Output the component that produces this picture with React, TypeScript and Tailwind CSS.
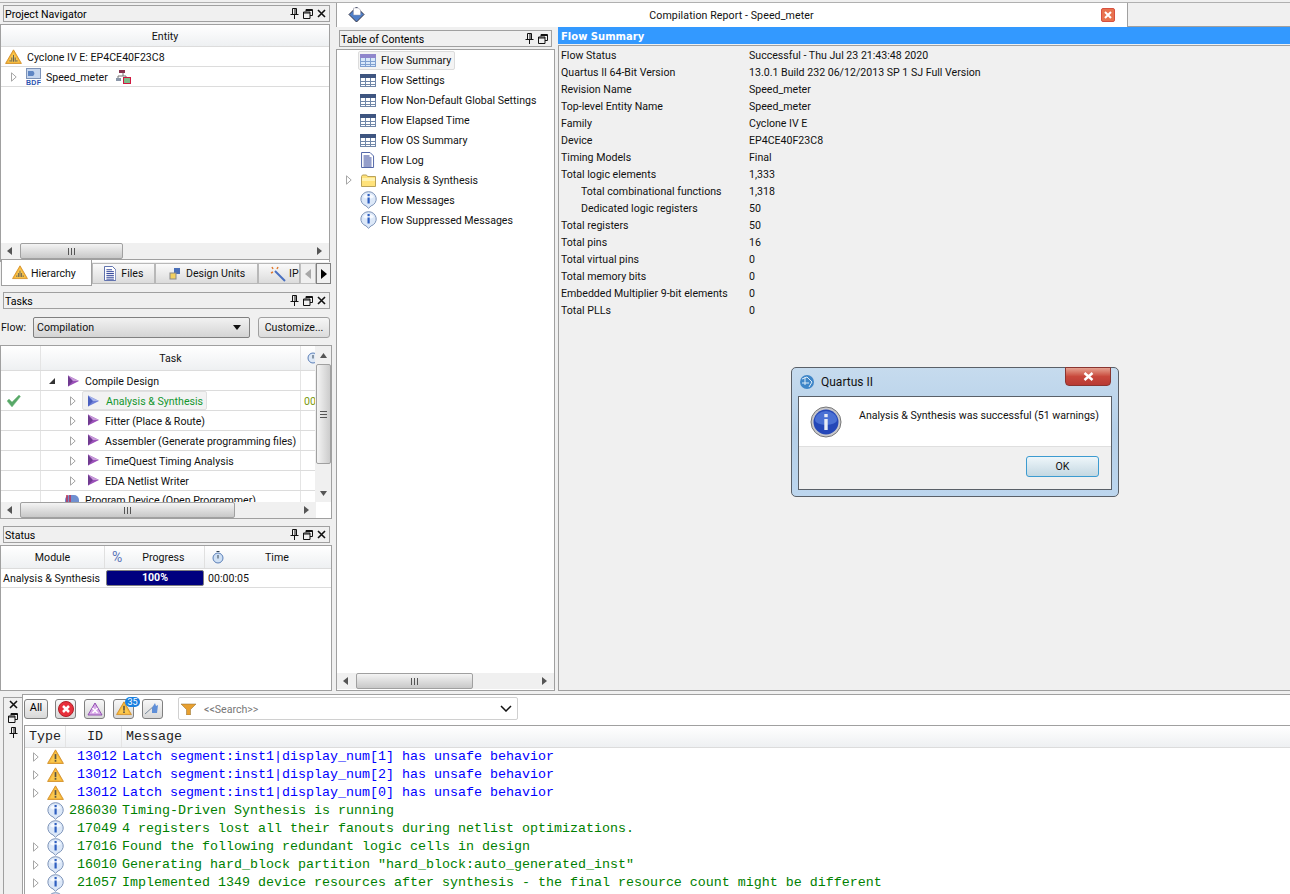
import React from "react";

const UI = { fontFamily: 'Roboto, "Liberation Sans", sans-serif' };
const MONO = { fontFamily: '"Liberation Mono", monospace' };
const HEAD = { fontFamily: '"DejaVu Sans", sans-serif' };

function Pin() {
  return (
    <svg width="9" height="11" viewBox="0 0 9 11" fill="none" stroke="#111">
      <path d="M2.500 .5h4v6h-4zM.5 6.500h8M4.500 7v4M5 1v5" />
    </svg>
  );
}
function Restore() {
  return (
    <svg width="10" height="10" viewBox="0 0 10 10" fill="none" stroke="#111">
      <path d="M3 2.500V.5h6.500v6H7M.5 3h6.500v6.500H.5z" />
      <path d="M.5 4h6.500M3 1.500h6.500" />
    </svg>
  );
}
function Close() {
  return (
    <svg width="9" height="9" viewBox="0 0 9 9" stroke="#111" strokeWidth="1.600">
      <path d="M1 1l7 7M8 1l-7 7" />
    </svg>
  );
}
function Title({ text, noClose, className }: { text: string; noClose?: boolean; className: string }) {
  return (
    <div className={`flex items-center h-[17px] border border-[#a0a0a0] bg-[#f0f0f0] pl-[1px] pr-[3px] text-black ${className}`}>
      <span className="flex-1 leading-[14px] pt-[2px]">{text}</span>
      <span className="flex items-center gap-[4px]">
        <Pin />
        <Restore />
        {!noClose && <Close />}
      </span>
    </div>
  );
}
function Warn({ size = 18, hatch }: { size?: number; hatch?: boolean }) {
  return (
    <svg width={size} height={size * 0.9} viewBox="0 0 20 18" className="shrink-0">
      <path d="M10 1L19.300 17H.7z" fill="#f6b73c" stroke="#d08a20" strokeLinejoin="round" />
      <path d="M10 4L16.500 15.500h-13z" fill="#fbc94f" />
      {hatch ? (
        <path d="M8 15V10M10 15V7M12 15V10M6 15V13M14 15V13" stroke="#5b5a55" strokeWidth="1.100" />
      ) : (
        <>
          <rect x="9" y="6" width="2" height="6" fill="#5b5340" />
          <rect x="9" y="13" width="2" height="2" fill="#5b5340" />
        </>
      )}
    </svg>
  );
}
function Info() {
  return (
    <svg width="17" height="18" viewBox="0 0 17 18" className="shrink-0">
      <path d="M8.500 .7a7.600 7.300 0 0 1 2.600 14.200L8.500 17.300 6 14.900A7.600 7.300 0 0 1 8.500 .7z" fill="#dce8f8" stroke="#7d93b8" />
      <path d="M3 6a6 5 0 0 1 11 0 6 3 0 0 1-11 0z" fill="#f6faff" />
      <rect x="7.500" y="6.500" width="2.200" height="6" fill="#2e5fc0" />
      <rect x="7.500" y="3" width="2.200" height="2.200" fill="#2e5fc0" />
    </svg>
  );
}
function Expand({ className = "" }: { className?: string }) {
  return (
    <svg width="6" height="10" viewBox="0 0 6 10" className={`shrink-0 ${className}`}>
      <path d="M.5 .8L5.200 5 .5 9.200z" fill="#fff" stroke="#a6a6a6" />
    </svg>
  );
}
function Play({ blue }: { blue?: boolean }) {
  return (
    <svg width="13" height="12" viewBox="0 0 13 12" className="shrink-0">
      <path d="M1 .5L12 6 1 11.500z" fill={blue ? "#6f7fd8" : "#9a4fb8"} />
      <path d="M1 .5L6 6 1 11.500z" fill={blue ? "#4a5fc0" : "#6f3a90"} />
      <path d="M1 .5L12 6 6 6z" fill={blue ? "#a8b4ea" : "#c79ad8"} />
    </svg>
  );
}
function TableIcon({ hi }: { hi?: boolean }) {
  const line = hi ? "#7f9fd0" : "#6f86a8";
  return (
    <svg width="16" height="13" viewBox="0 0 16 13" className="shrink-0">
      <rect x=".5" y=".5" width="15" height="12" fill={hi ? "#d9e8fa" : "#fff"} stroke={line} />
      <rect x="0" y="0" width="16" height="4" fill={hi ? "#8f86cc" : "#3e5580"} />
      <path d="M0 7.500h16M0 10.500h16M5.500 4v9M10.500 4v9" stroke={line} />
    </svg>
  );
}
function DocIcon({ size = 16 }: { size?: number }) {
  return (
    <svg width={size * 0.82} height={size} viewBox="0 0 13 16" className="shrink-0">
      <path d="M.5 .5h8.500l3.500 3.500v11.500H.5z" fill="#fff" stroke="#5468a8" />
      <path d="M2.500 4h6M2.500 6h8M2.500 8h8M2.500 10h8M2.500 12h8M2.500 14h8" stroke="#2b3f96" />
    </svg>
  );
}
function Folder() {
  return (
    <svg width="15" height="13" viewBox="0 0 15 13" className="shrink-0">
      <path d="M.5 2.500l1-1.500h4l1 1.500h8v10H.5z" fill="#ffe27a" stroke="#b9a25a" />
      <path d="M1 4h13v3H1z" fill="#fff2b0" />
    </svg>
  );
}
function HScroll({ thumbLeft, thumbWidth, w, cls }: { thumbLeft: number; thumbWidth: number; w: string; cls?: string }) {
  return (
    <div className={`flex items-center h-[16px] shrink-0 bg-[#f0f0f0] ${w} ${cls ?? ""}`}>
      <svg width="6" height="8" viewBox="0 0 6 8" className="ml-[6px] shrink-0"><path d="M5 0v8L0 4z" fill="#555" /></svg>
      <div className="flex-1 h-full">
        <div
          className="h-full border border-[#a0a0a0] rounded-[2px] bg-gradient-to-b from-[#f4f4f4] to-[#c8c8c8] flex items-center justify-center"
          style={{ marginLeft: thumbLeft, width: thumbWidth }}
        >
          <svg width="7" height="7" viewBox="0 0 7 7" stroke="#555"><path d="M.5 0v7M3.500 0v7M6.500 0v7" /></svg>
        </div>
      </div>
      <svg width="6" height="8" viewBox="0 0 6 8" className="mr-[6px] shrink-0"><path d="M0 0v8l5-4z" fill="#555" /></svg>
    </div>
  );
}
function Tab({ w, pl, gap, icon, label }: { w: string; pl: string; gap: string; icon: React.ReactNode; label: string }) {
  return (
    <div className={`flex items-center h-[21px] mt-[3px] border border-[#b8b8b8] bg-gradient-to-b from-[#fafafa] to-[#dcdcdc] overflow-hidden ${w} ${pl} ${gap}`}>
      {icon}
      <span>{label}</span>
    </div>
  );
}

const tasks = [
  { name: "Analysis & Synthesis", active: true },
  { name: "Fitter (Place & Route)" },
  { name: "Assembler (Generate programming files)" },
  { name: "TimeQuest Timing Analysis" },
  { name: "EDA Netlist Writer" },
];

function LeftColumn() {
  return (
    <div className="w-[333px] shrink-0 flex flex-col pt-[2px] text-[10.6px] text-[#111]">
      <Title text="Project Navigator" className="ml-[3px] w-[327px]" />
      <div className="mt-[2px] w-[330px] h-[238px] shrink-0 border-t border-x border-[#a0a0a0] bg-white flex flex-col">
        <div className="h-[21px] shrink-0 pt-[3px] bg-gradient-to-b from-white to-[#eef0f2] flex items-center justify-center">Entity</div>
        <div className="h-[21px] shrink-0 border-y border-[#dcdcdc] flex items-center pl-[4px] gap-[5px]">
          <Warn size={17} hatch />
          <span className="pt-[2px]">Cyclone IV E: EP4CE40F23C8</span>
        </div>
        <div className="h-[20px] shrink-0 border-b border-[#dcdcdc] flex items-center pl-[10px]">
          <Expand />
          <svg width="15" height="17" viewBox="0 0 15 17" className="ml-[9px]">
            <rect x=".5" y=".5" width="14" height="10" fill="#c6d6ee" stroke="#7d93b8" />
            <path d="M2 3h5a3 3 0 0 1 0 5H2z" fill="#5f86c4" />
            <text x="0" y="16.500" fontSize="7" fontWeight="700" fill="#2d54b0" fontFamily="Liberation Sans, sans-serif" textLength="15">BDF</text>
          </svg>
          <span className="ml-[5px] pt-[2px]">Speed_meter</span>
          <svg width="15" height="14" viewBox="0 0 15 14" className="ml-[8px]">
            <path d="M7 3v3M2 6h8M2 6v2M10 6v2" stroke="#777" fill="none" />
            <rect x="3" y="0" width="6" height="3" fill="#8a3550" />
            <rect x="0" y="8" width="5" height="3" fill="#8a96a8" />
            <rect x="7.500" y="7.500" width="7" height="6" fill="#7dbb8a" stroke="#d01840" />
          </svg>
        </div>
        <div className="flex-1" />
        <HScroll thumbLeft={7} thumbWidth={103} w="w-full" />
        <div className="h-[3px] shrink-0 border-t border-[#a0a0a0]" />
      </div>
      <div className="flex items-start h-[26px] shrink-0 -mt-[2px]">
        <div className="w-[91px] h-[26px] ml-[1px] bg-white border-x border-b border-[#a0a0a0] flex items-center pl-[10px] gap-[3px] z-10">
          <Warn size={16} hatch />
          <span className="pt-[2px]">Hierarchy</span>
        </div>
        <Tab w="w-[63px]" pl="pl-[11px]" gap="gap-[5px]" icon={<DocIcon size={15} />} label="Files" />
        <Tab w="w-[103px]" pl="pl-[13px]" gap="gap-[5px]" icon={
          <svg width="12" height="13" viewBox="0 0 12 13"><rect x="5" y="1" width="6" height="6" fill="#4a6fb8" /><rect x="1" y="6" width="6" height="6" fill="#f2d060" stroke="#888" /></svg>
        } label="Design Units" />
        <Tab w="w-[42px]" pl="pl-[11px]" gap="gap-[3px]" icon={
          <svg width="16" height="16" viewBox="0 0 16 16" className="shrink-0"><path d="M5 5l10 10" stroke="#4a70c0" strokeWidth="2" /><path d="M2 1l1 2M8 1L7 3M1 7l2-1" stroke="#e07a30" strokeWidth="1.500" /></svg>
        } label="IP" />
        <div className="w-[16px] h-[21px] mt-[3px] border border-[#c0c0c0] bg-[#f0f0f0] flex items-center justify-center">
          <svg width="6" height="10" viewBox="0 0 6 10"><path d="M6 0v10L0 5z" fill="#a8a8a8" /></svg>
        </div>
        <div className="w-[15px] h-[21px] mt-[3px] border border-[#808080] bg-[#f0f0f0] flex items-center justify-center">
          <svg width="6" height="10" viewBox="0 0 6 10"><path d="M0 0v10l6-5z" fill="#000" /></svg>
        </div>
      </div>
      <Title text="Tasks" className="ml-[3px] w-[327px] mt-[6px] shrink-0" />
      <div className="flex items-center h-[23px] shrink-0 mt-[7px]">
        <span className="w-[33px] pl-[1px] pt-[1px]">Flow:</span>
        <div className="w-[217px] h-[21px] border border-[#808080] rounded-[2px] bg-gradient-to-b from-[#f2f2f2] to-[#d4d4d4] flex items-center pl-[3px] pr-[8px]">
          <span className="flex-1">Compilation</span>
          <svg width="8" height="5" viewBox="0 0 8 5"><path d="M0 0h8L4 5z" fill="#111" /></svg>
        </div>
        <div className="ml-[8px] w-[72px] h-[21px] pt-[1px] border border-[#a0a0a0] rounded-[3px] bg-gradient-to-b from-[#f6f6f6] to-[#dcdcdc] flex items-center justify-center">Customize...</div>
      </div>
      <div className="mt-[6px] w-[332px] h-[174px] shrink-0 border border-[#a0a0a0] bg-white flex flex-col">
        <div className="flex flex-1 min-h-0">
          <div className="flex-1 min-w-0 overflow-hidden">
            <div className="grid grid-cols-[40px_260px_15px] h-[25px] bg-gradient-to-b from-white to-[#eef0f2] border-b border-[#dcdcdc]">
              <div className="border-r border-[#e4e4e4]" />
              <div className="border-r border-[#e4e4e4] flex items-center justify-center pt-[1px]">Task</div>
              <div className="flex items-center pl-[6px] overflow-hidden">
                <svg width="12" height="12" viewBox="0 0 12 12" className="shrink-0"><circle cx="6" cy="6" r="5" fill="#dde8f6" stroke="#5a7fb8" /><path d="M6 3v3.500" stroke="#345" /></svg>
              </div>
            </div>
            <div className="grid grid-cols-[40px_260px_15px] h-[20px] border-b border-[#dcdcdc]">
              <div className="border-r border-[#e4e4e4]" />
              <div className="border-r border-[#e4e4e4] flex items-center pl-[8px]">
                <svg width="6" height="6" viewBox="0 0 6 6"><path d="M6 0v6H0z" fill="#333" /></svg>
                <span className="ml-[12px] flex"><Play /></span>
                <span className="ml-[5px] pt-[2px]">Compile Design</span>
              </div>
              <div />
            </div>
            {tasks.map((t) => (
              <div key={t.name} className="grid grid-cols-[40px_260px_15px] h-[20px] border-b border-[#dcdcdc]">
                <div className="border-r border-[#e4e4e4] flex items-center pl-[5px]">
                  {t.active && (
                    <svg width="15" height="12" viewBox="0 0 15 12"><path d="M1 6l2-2 3 3 7-7 1.500 1.500L6 12z" fill="#58a868" stroke="#7fc08a" strokeWidth=".5" /></svg>
                  )}
                </div>
                <div className="border-r border-[#e4e4e4] flex items-center pl-[29px] whitespace-nowrap">
                  <Expand />
                  {t.active ? (
                    <span className="ml-[6px] h-[19px] pl-[4px] pr-[3px] flex items-center gap-[6px] bg-[#f2f2f2] border border-[#e0e0e0] rounded-[2px] text-[#12962e]">
                      <Play blue />
                      <span className="pt-[2px]">{t.name}</span>
                    </span>
                  ) : (
                    <span className="ml-[11px] flex items-center gap-[5px]">
                      <Play />
                      <span className="pt-[2px]">{t.name}</span>
                    </span>
                  )}
                </div>
                <div className="flex items-center pl-[3px] pt-[2px] text-[#7a9a10] overflow-hidden">{t.active ? "00" : ""}</div>
              </div>
            ))}
            <div className="grid grid-cols-[40px_260px_15px] h-[20px]">
              <div className="border-r border-[#e4e4e4]" />
              <div className="border-r border-[#e4e4e4] flex items-center pl-[23px] gap-[5px] whitespace-nowrap">
                <svg width="16" height="14" viewBox="0 0 16 14"><rect x="1" y="1" width="14" height="13" rx="5" fill="#6f8fd0" /><path d="M3 1v8M6 1v8" stroke="#c03050" strokeWidth="1.500" /></svg>
                Program Device (Open Programmer)
              </div>
              <div />
            </div>
          </div>
          <div className="w-[16px] shrink-0 bg-[#f0f0f0] flex flex-col items-center">
            <svg width="7" height="5" viewBox="0 0 7 5" className="mt-[7px]"><path d="M0 5h7L3.500 0z" fill="#555" /></svg>
            <div className="mt-[6px] w-[15px] h-[100px] border border-[#a0a0a0] rounded-[2px] bg-gradient-to-r from-[#f4f4f4] to-[#cccccc] flex items-center justify-center">
              <svg width="7" height="7" viewBox="0 0 7 7" stroke="#555"><path d="M0 .5h7M0 3.500h7M0 6.500h7" /></svg>
            </div>
            <div className="flex-1" />
            <svg width="7" height="5" viewBox="0 0 7 5" className="mb-[6px]"><path d="M0 0h7L3.500 5z" fill="#555" /></svg>
          </div>
        </div>
        <HScroll thumbLeft={7} thumbWidth={215} w="w-[315px]" />
      </div>
      <Title text="Status" className="ml-[3px] w-[327px] mt-[7px] shrink-0" />
      <div className="mt-[2px] w-[332px] flex-1 border border-[#a0a0a0] bg-white flex flex-col">
        <div className="grid grid-cols-[104px_100px_1fr] h-[23px] bg-gradient-to-b from-white to-[#eef0f2] border-b border-[#dcdcdc]">
          <div className="border-r border-[#e0e0e0] flex items-center justify-center pt-[1px]">Module</div>
          <div className="border-r border-[#e0e0e0] flex items-center pl-[7px]">
            <span className="text-[#5a74b8] text-[14px] leading-none">%</span>
            <span className="ml-[20px] pt-[1px]">Progress</span>
          </div>
          <div className="flex items-center pl-[7px]">
            <svg width="12" height="13" viewBox="0 0 12 13"><circle cx="6" cy="7" r="5" fill="#cfe0f4" stroke="#5a7fb8" /><path d="M6 4v3.500M4.500 .5h3" stroke="#345" /></svg>
            <span className="ml-[41px] pt-[1px]">Time</span>
          </div>
        </div>
        <div className="flex items-center h-[19px] border-b border-[#dcdcdc] whitespace-nowrap">
          <span className="w-[105px] pl-[2px] pt-[1px]">Analysis &amp; Synthesis</span>
          <div className="w-[98px] h-[16px] border border-[#808080] rounded-[2px] bg-[#00007f] text-white font-bold flex items-center justify-center">100%</div>
          <span className="ml-[4px] pt-[1px]">00:00:05</span>
        </div>
      </div>
    </div>
  );
}

const toc: { label: string; icon: React.ReactNode; active?: boolean; expand?: boolean }[] = [
  { label: "Flow Summary", icon: <TableIcon hi />, active: true },
  { label: "Flow Settings", icon: <TableIcon /> },
  { label: "Flow Non-Default Global Settings", icon: <TableIcon /> },
  { label: "Flow Elapsed Time", icon: <TableIcon /> },
  { label: "Flow OS Summary", icon: <TableIcon /> },
  { label: "Flow Log", icon: <DocIcon /> },
  { label: "Analysis & Synthesis", icon: <Folder />, expand: true },
  { label: "Flow Messages", icon: <Info /> },
  { label: "Flow Suppressed Messages", icon: <Info /> },
];

const summary: [string, string, boolean?][] = [
  ["Flow Status", "Successful - Thu Jul 23 21:43:48 2020"],
  ["Quartus II 64-Bit Version", "13.0.1 Build 232 06/12/2013 SP 1 SJ Full Version"],
  ["Revision Name", "Speed_meter"],
  ["Top-level Entity Name", "Speed_meter"],
  ["Family", "Cyclone IV E"],
  ["Device", "EP4CE40F23C8"],
  ["Timing Models", "Final"],
  ["Total logic elements", "1,333"],
  ["Total combinational functions", "1,318", true],
  ["Dedicated logic registers", "50", true],
  ["Total registers", "50"],
  ["Total pins", "16"],
  ["Total virtual pins", "0"],
  ["Total memory bits", "0"],
  ["Embedded Multiplier 9-bit elements", "0"],
  ["Total PLLs", "0"],
];

function Center() {
  return (
    <div className="flex-1 min-w-0 flex flex-col text-[10.6px] text-[#111]">
      <div className="flex h-[24px] shrink-0">
        <div className="ml-[3px] w-[792px] border-r border-l border-[#a0a0a0] bg-white flex items-center pl-[11px]">
          <svg width="17" height="17" viewBox="0 0 17 17" className="mb-[2px]">
            <path d="M8.500 1L16 8.500 8.500 16 1 8.500z" fill="#4f7fc8" stroke="#334" />
            <path d="M5.500 2h5l2 2v5h-7z" fill="#fff" stroke="#99a" strokeWidth=".5" />
          </svg>
          <span className="flex-1 text-center pr-[3px] pt-[1px] tracking-[.1px]">Compilation Report - Speed_meter</span>
          <span className="w-[14px] h-[14px] mr-[12px] bg-[#e8734f] border border-[#d85040] rounded-[2px] flex items-center justify-center">
            <svg width="8" height="8" viewBox="0 0 8 8" stroke="#fff" strokeWidth="2"><path d="M1 1l6 6M7 1L1 7" /></svg>
          </span>
        </div>
        <div className="flex-1 border-b border-[#a0a0a0]" />
      </div>
      <div className="flex flex-1 min-h-0">
        <div className="w-[219px] ml-[3px] shrink-0 flex flex-col">
          <Title text="Table of Contents" noClose className="ml-[3px] w-[213px] mt-[3px]" />
          <div className="mt-[2px] flex-1 border border-[#a0a0a0] bg-white flex flex-col min-h-0">
            <div className="flex-1">
              {toc.map((t) => (
                <div key={t.label} className="h-[20px] flex items-center whitespace-nowrap">
                  <span className="w-[21px] pl-[9px] flex shrink-0">{t.expand && <Expand />}</span>
                  <span className={`h-[19px] pl-[1px] pr-[3px] flex items-center border rounded-[2px] ${t.active ? "border-[#dcdcdc] bg-[#f4f4f4]" : "border-transparent"}`}>
                    <span className="w-[16px] flex justify-center shrink-0">{t.icon}</span>
                    <span className="ml-[5px] pt-[1px]">{t.label}</span>
                  </span>
                </div>
              ))}
            </div>
            <HScroll thumbLeft={7} thumbWidth={117} w="w-full" cls="mb-[1px]" />
          </div>
        </div>
        <div className="flex-1 ml-[3px] flex flex-col min-w-0">
          <div className="h-[17px] bg-[#3399ff] text-white font-bold text-[10px] pl-[3px] pt-[1px] flex items-center" style={HEAD}>Flow Summary</div>
          <div className="mt-[1px] flex-1 border-l border-t border-b border-[#a0a0a0] pt-[1px]">
            {summary.map(([k, v, ind]) => (
              <div key={k} className="h-[17px] flex items-center whitespace-nowrap">
                <span className={`w-[190px] ${ind ? "pl-[22px]" : "pl-[2px]"}`}>{k}</span>
                <span>{v}</span>
              </div>
            ))}
          </div>
        </div>
      </div>
    </div>
  );
}

const msgs: { id: string; text: string; kind: "w" | "i"; exp: boolean }[] = [
  { id: "13012", text: "Latch segment:inst1|display_num[1] has unsafe behavior", kind: "w", exp: true },
  { id: "13012", text: "Latch segment:inst1|display_num[2] has unsafe behavior", kind: "w", exp: true },
  { id: "13012", text: "Latch segment:inst1|display_num[0] has unsafe behavior", kind: "w", exp: true },
  { id: "286030", text: "Timing-Driven Synthesis is running", kind: "i", exp: false },
  { id: "17049", text: "4 registers lost all their fanouts during netlist optimizations.", kind: "i", exp: false },
  { id: "17016", text: "Found the following redundant logic cells in design", kind: "i", exp: true },
  { id: "16010", text: 'Generating hard_block partition "hard_block:auto_generated_inst"', kind: "i", exp: true },
  { id: "21057", text: "Implemented 1349 device resources after synthesis - the final resource count might be different", kind: "i", exp: true },
];

function ToolBtn({ children, w = "w-[21px]" }: { children: React.ReactNode; w?: string }) {
  return (
    <div className={`${w} h-[20px] border border-[#808080] rounded-[3px] bg-gradient-to-b from-[#f8f8f8] to-[#d8d8d8] flex items-center justify-center relative`}>
      {children}
    </div>
  );
}

function Messages() {
  return (
    <div className="flex flex-1 min-h-0 pl-[3px] pt-[3px] text-[10.6px]">
      <div className="w-[19px] mt-[3px] border-l border-t border-[#a0a0a0] bg-[#f0f0f0] flex flex-col items-center pt-[2px] gap-[4px] shrink-0">
        <Close />
        <Restore />
        <Pin />
      </div>
      <div className="flex-1 min-w-0 border-l border-t border-[#a0a0a0] bg-white flex flex-col overflow-hidden">
        <div className="h-[30px] flex items-center shrink-0 pl-[1px] pb-[3px]">
          <ToolBtn w="w-[24px]"><span className="text-[11px]">All</span></ToolBtn>
          <div className="ml-[7px]">
            <ToolBtn>
              <svg width="16" height="16" viewBox="0 0 16 16"><circle cx="8" cy="8" r="7.500" fill="#e8303c" stroke="#b02028" /><path d="M5 5l6 6M11 5l-6 6" stroke="#fff" strokeWidth="2.500" /></svg>
            </ToolBtn>
          </div>
          <div className="ml-[8px]">
            <ToolBtn>
              <svg width="16" height="14" viewBox="0 0 16 14"><path d="M8 1l7 12H1z" fill="#d8a8e8" stroke="#9050b0" /><path d="M5.500 6l5 5M10.500 6l-5 5" stroke="#fff" strokeWidth="1.500" /></svg>
            </ToolBtn>
          </div>
          <div className="ml-[8px]">
            <ToolBtn>
              <Warn size={16} />
              <span className="absolute -top-[3px] left-[11px] w-[15px] h-[10px] rounded-full bg-[#1a80e0] text-white text-[9px] leading-[10px] text-center">35</span>
            </ToolBtn>
          </div>
          <div className="ml-[8px]">
            <ToolBtn>
              <svg width="15" height="13" viewBox="0 0 15 13"><path d="M0 12L10 3" stroke="#789" /><path d="M7 6l3-5 1 3 2-1-1 8H7z" fill="#5f8fd8" /></svg>
            </ToolBtn>
          </div>
          <div className="ml-[15px] w-[340px] h-[23px] border border-[#d0d0d0] rounded-[2px] flex items-center pl-[2px] pr-[5px]">
            <svg width="15" height="12" viewBox="0 0 15 12"><path d="M0 1h15L9.500 6.500V12h-4V6.500z" fill="#e8a030" stroke="#8a6a30" strokeWidth=".5" /></svg>
            <span className="ml-[8px] flex-1 text-[#777] pt-[2px]">&lt;&lt;Search&gt;&gt;</span>
            <svg width="12" height="7" viewBox="0 0 12 7" fill="none" stroke="#111" strokeWidth="1.500"><path d="M1 1l5 5 5-5" /></svg>
          </div>
        </div>
        <div className="flex-1 ml-[1px] border-l border-t border-[#a0a0a0] overflow-hidden flex flex-col text-[13.33px]" style={MONO}>
          <div className="flex h-[22px] shrink-0 items-center bg-gradient-to-b from-white to-[#eef0f2] border-b border-[#dcdcdc] text-[#222]">
            <span className="w-[41px] pl-[4px] border-r border-[#e4e4e4] h-full flex items-center">Type</span>
            <span className="w-[56px] pl-[21px] border-r border-[#e4e4e4] h-full flex items-center">ID</span>
            <span className="pl-[4px]">Message</span>
          </div>
          {msgs.map((m, i) => (
            <div key={i} className={`flex h-[18px] shrink-0 items-center whitespace-pre ${m.kind === "w" ? "text-[#0000ff]" : "text-[#008000]"}`}>
              <span className="w-[21px] pl-[8px] flex">{m.exp && <Expand />}</span>
              <span className="w-[18px] flex justify-center"><span className="flex">{m.kind === "w" ? <Warn size={17} /> : <Info />}</span></span>
              <span className="w-[53px] text-right">{m.id}</span>
              <span className="ml-[5px]">{m.text}</span>
            </div>
          ))}
          <div className="flex h-[18px] shrink-0 pl-[22px]"><Info /></div>
        </div>
      </div>
    </div>
  );
}

function Dialog() {
  return (
    <div className="absolute left-[791px] top-[367px] w-[328px] h-[130px] rounded-[5px] border border-[#5a6068] bg-gradient-to-b from-[#c6dbee] via-[#b4cfe8] to-[#bdd6ee] flex flex-col px-[6px] pb-[6px] text-[10.6px] text-[#111]">
      <div className="h-[28px] flex items-center shrink-0 relative">
        <svg width="16" height="16" viewBox="0 0 16 16" className="ml-[1px]"><circle cx="8" cy="8" r="7" fill="#3f86c8" /><path d="M3 5l5-2 5 5-3 5" stroke="#dcecf8" fill="none" /><path d="M3 9h7M6 3v8" stroke="#dcecf8" /></svg>
        <span className="ml-[6px] text-[12px]">Quartus II</span>
        <div className="absolute right-[1px] -top-px w-[46px] h-[19px] rounded-b-[4px] border border-[#8a3530] bg-gradient-to-b from-[#e4a090] via-[#c8483c] to-[#b83a34] flex items-center justify-center">
          <svg width="11" height="9" viewBox="0 0 11 9" stroke="#fff" strokeWidth="2.500"><path d="M1.500 1l8 7M9.500 1l-8 7" /></svg>
        </div>
      </div>
      <div className="flex-1 border border-[#5a6068] flex flex-col">
        <div className="h-[50px] bg-white border-b border-[#dfdfdf] flex pl-[11px] pt-[9px]">
          <svg width="32" height="32" viewBox="0 0 32 32" className="shrink-0">
            <circle cx="16" cy="16" r="15" fill="#c8c8cc" stroke="#777" />
            <circle cx="16" cy="16" r="12.500" fill="#2447b8" />
            <path d="M5 14a11 9 0 0 1 22 0 11 5 0 0 1-22 0z" fill="#4a70d4" />
            <rect x="14.300" y="13" width="3.400" height="11" fill="#e8ecf4" />
            <rect x="14.300" y="8" width="3.400" height="3.200" fill="#e8ecf4" />
          </svg>
          <span className="ml-[17px] pt-[2px] whitespace-nowrap">Analysis &amp; Synthesis was successful (51 warnings)</span>
        </div>
        <div className="flex-1 bg-[#f0f0f0] flex justify-end pt-[9px] pr-[12px]">
          <div className="w-[73px] h-[21px] border border-[#3c9bd0] rounded-[3px] bg-gradient-to-b from-[#eef6fa] to-[#c4d8e2] flex items-center justify-center">OK</div>
        </div>
      </div>
    </div>
  );
}

export default function App() {
  return (
    <div className="relative w-[1290px] h-[894px] overflow-hidden bg-[#f0f0f0] flex flex-col" style={UI}>
      <div className="h-[3px] shrink-0 border-b border-[#b0b0b0]" />
      <div className="flex h-[688px] shrink-0">
        <LeftColumn />
        <Center />
      </div>
      <Messages />
      <Dialog />
    </div>
  );
}
